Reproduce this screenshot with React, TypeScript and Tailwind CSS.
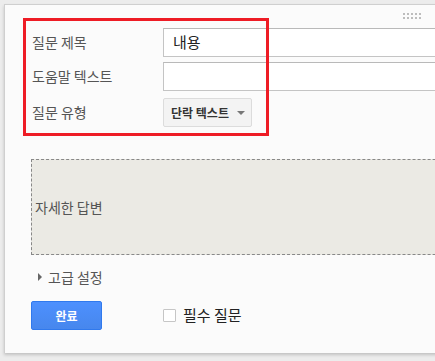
import React from 'react';

const font = { fontFamily: '"Noto Sans CJK KR", "Noto Sans", sans-serif' };

const DragHandle: React.FC = () => (
  <div className="absolute left-[398px] top-[8px] grid grid-cols-[repeat(5,2px)] gap-[2px]">
    {Array.from({ length: 10 }).map((_, i) => (
      <span key={i} className="block w-[2px] h-[2px] bg-[#bdbdbd]" />
    ))}
  </div>
);

const Row: React.FC<{ label: string; children: React.ReactNode; className?: string }> = ({ label, children, className }) => (
  <div className={`flex items-center ${className || ''}`}>
    <div className="w-[132px] shrink-0 text-[14px] text-[#555] pl-[1px]">{label}</div>
    {children}
  </div>
);

export default function App() {
  return (
    <div className="w-[435px] h-[361px] overflow-hidden bg-[#ececec] pt-[4px] pl-[4px]" style={font}>
      <div className="relative w-[600px] h-[349px] bg-[#fbfbfb] border-t border-l border-[#cfcfcf] shadow-[0_2px_3px_rgba(0,0,0,0.18)] pl-[26px] pt-[23px]">
        <div className="absolute left-[18px] top-[13px] w-[246px] h-[118px] border-[3px] border-[#ee1c25] pointer-events-none z-10" />
        <DragHandle />

        <Row label="질문 제목">
          <div className="w-[300px] h-[29px] bg-white border border-[#c4c4c4] border-t-[#b9b9b9] flex items-center pl-[9px] text-[15px] text-[#222]">
            내용
          </div>
        </Row>
        <Row label="도움말 텍스트" className="mt-[5px]">
          <div className="w-[300px] h-[29px] bg-white border border-[#c4c4c4] border-t-[#b9b9b9]" />
        </Row>
        <Row label="질문 유형" className="mt-[7px]">
          <div className="w-[89px] h-[29px] bg-[#f3f3f3] border border-[#dcdcdc] rounded-[2px] flex items-center pl-[7px] gap-[8px] text-[12px] font-bold text-[#333]">
            <span>단락 텍스트</span>
            <span className="w-0 h-0 border-l-[4px] border-r-[4px] border-t-[4px] border-l-transparent border-r-transparent border-t-[#777]" />
          </div>
        </Row>

        <div className="mt-[32px] w-[500px] h-[96px] bg-[#ebeae4] border border-dashed border-[#888] flex items-center pl-[3px] text-[14px] text-[#555]">
          자세한 답변
        </div>

        <div className="mt-[14px] flex items-center pl-[7px] h-[16px] text-[14px] text-[#555]">
          <span className="w-0 h-0 border-t-[4px] border-b-[4px] border-l-[4px] border-t-transparent border-b-transparent border-l-[#666] mr-[6px]" />
          <span>고급 설정</span>
        </div>

        <div className="mt-[16px] flex items-center">
          <button className="w-[71px] h-[29px] rounded-[2px] border border-[#3079ed] bg-gradient-to-b from-[#4d90fe] to-[#4787ed] text-white text-[12px] font-bold">
            완료
          </button>
          <div className="ml-[61px] flex items-center">
            <span className="w-[13px] h-[13px] border border-[#c6c6c6] bg-white rounded-[1px]" />
            <span className="ml-[7px] text-[15px] text-[#222]">필수 질문</span>
          </div>
        </div>
      </div>
    </div>
  );
}
